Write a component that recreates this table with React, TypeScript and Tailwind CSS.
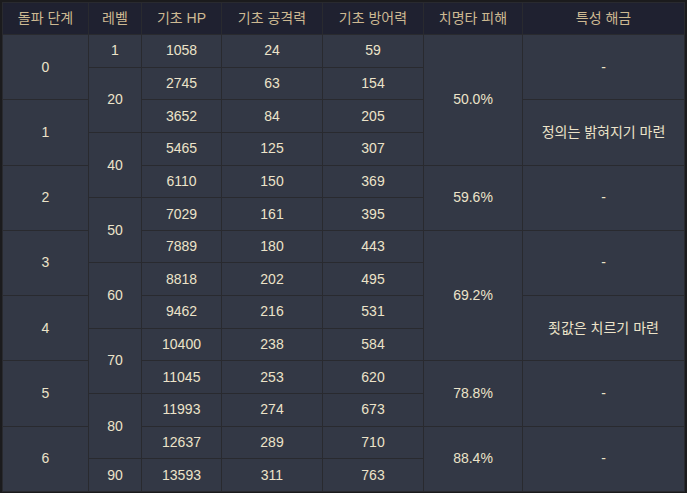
import React from 'react';

type Cell = { text: string; span?: 1 | 2 | 4 };

const headers = ['돌파 단계', '레벨', '기초 HP', '기초 공격력', '기초 방어력', '치명타 피해', '특성 해금'];

// one array per table row, cells already covered by a rowspan are left out
const rows: Cell[][] = [
  [{ text: '0', span: 2 }, { text: '1' }, { text: '1058' }, { text: '24' }, { text: '59' }, { text: '50.0%', span: 4 }, { text: '-', span: 2 }],
  [{ text: '20', span: 2 }, { text: '2745' }, { text: '63' }, { text: '154' }],
  [{ text: '1', span: 2 }, { text: '3652' }, { text: '84' }, { text: '205' }, { text: '정의는 밝혀지기 마련', span: 2 }],
  [{ text: '40', span: 2 }, { text: '5465' }, { text: '125' }, { text: '307' }],
  [{ text: '2', span: 2 }, { text: '6110' }, { text: '150' }, { text: '369' }, { text: '59.6%', span: 2 }, { text: '-', span: 2 }],
  [{ text: '50', span: 2 }, { text: '7029' }, { text: '161' }, { text: '395' }],
  [{ text: '3', span: 2 }, { text: '7889' }, { text: '180' }, { text: '443' }, { text: '69.2%', span: 4 }, { text: '-', span: 2 }],
  [{ text: '60', span: 2 }, { text: '8818' }, { text: '202' }, { text: '495' }],
  [{ text: '4', span: 2 }, { text: '9462' }, { text: '216' }, { text: '531' }, { text: '죗값은 치르기 마련', span: 2 }],
  [{ text: '70', span: 2 }, { text: '10400' }, { text: '238' }, { text: '584' }],
  [{ text: '5', span: 2 }, { text: '11045' }, { text: '253' }, { text: '620' }, { text: '78.8%', span: 2 }, { text: '-', span: 2 }],
  [{ text: '80', span: 2 }, { text: '11993' }, { text: '274' }, { text: '673' }],
  [{ text: '6', span: 2 }, { text: '12637' }, { text: '289' }, { text: '710' }, { text: '88.4%', span: 2 }, { text: '-', span: 2 }],
  [{ text: '90' }, { text: '13593' }, { text: '311' }, { text: '763' }],
];

const spanClass = { 1: '', 2: 'row-span-2', 4: 'row-span-4' };

export default function App() {
  return (
    <div
      className="w-[687px] h-[493px] bg-[#1b1b1d] pt-[2px] pl-[2px]"
      style={{ fontFamily: '"Liberation Sans", "Noto Sans CJK KR", sans-serif' }}
    >
      <div className="grid w-[683px] h-[490px] gap-px p-px bg-[#292a2f] grid-cols-[85px_52px_79px_100px_100px_98px_161px] grid-rows-[31px_repeat(14,minmax(0,1fr))] text-[14px]">
        {headers.map(h => (
          <div key={h} className="flex items-center justify-center bg-[#1f2130] text-[#cdb992]">
            {h}
          </div>
        ))}
        {rows.flatMap((row, r) =>
          row.map((cell, c) => (
            <div
              key={`${r}-${c}`}
              className={`flex items-center justify-center bg-[#333845] text-[#ece3c9] ${spanClass[cell.span ?? 1]}`}
            >
              {cell.text}
            </div>
          ))
        )}
      </div>
    </div>
  );
}
